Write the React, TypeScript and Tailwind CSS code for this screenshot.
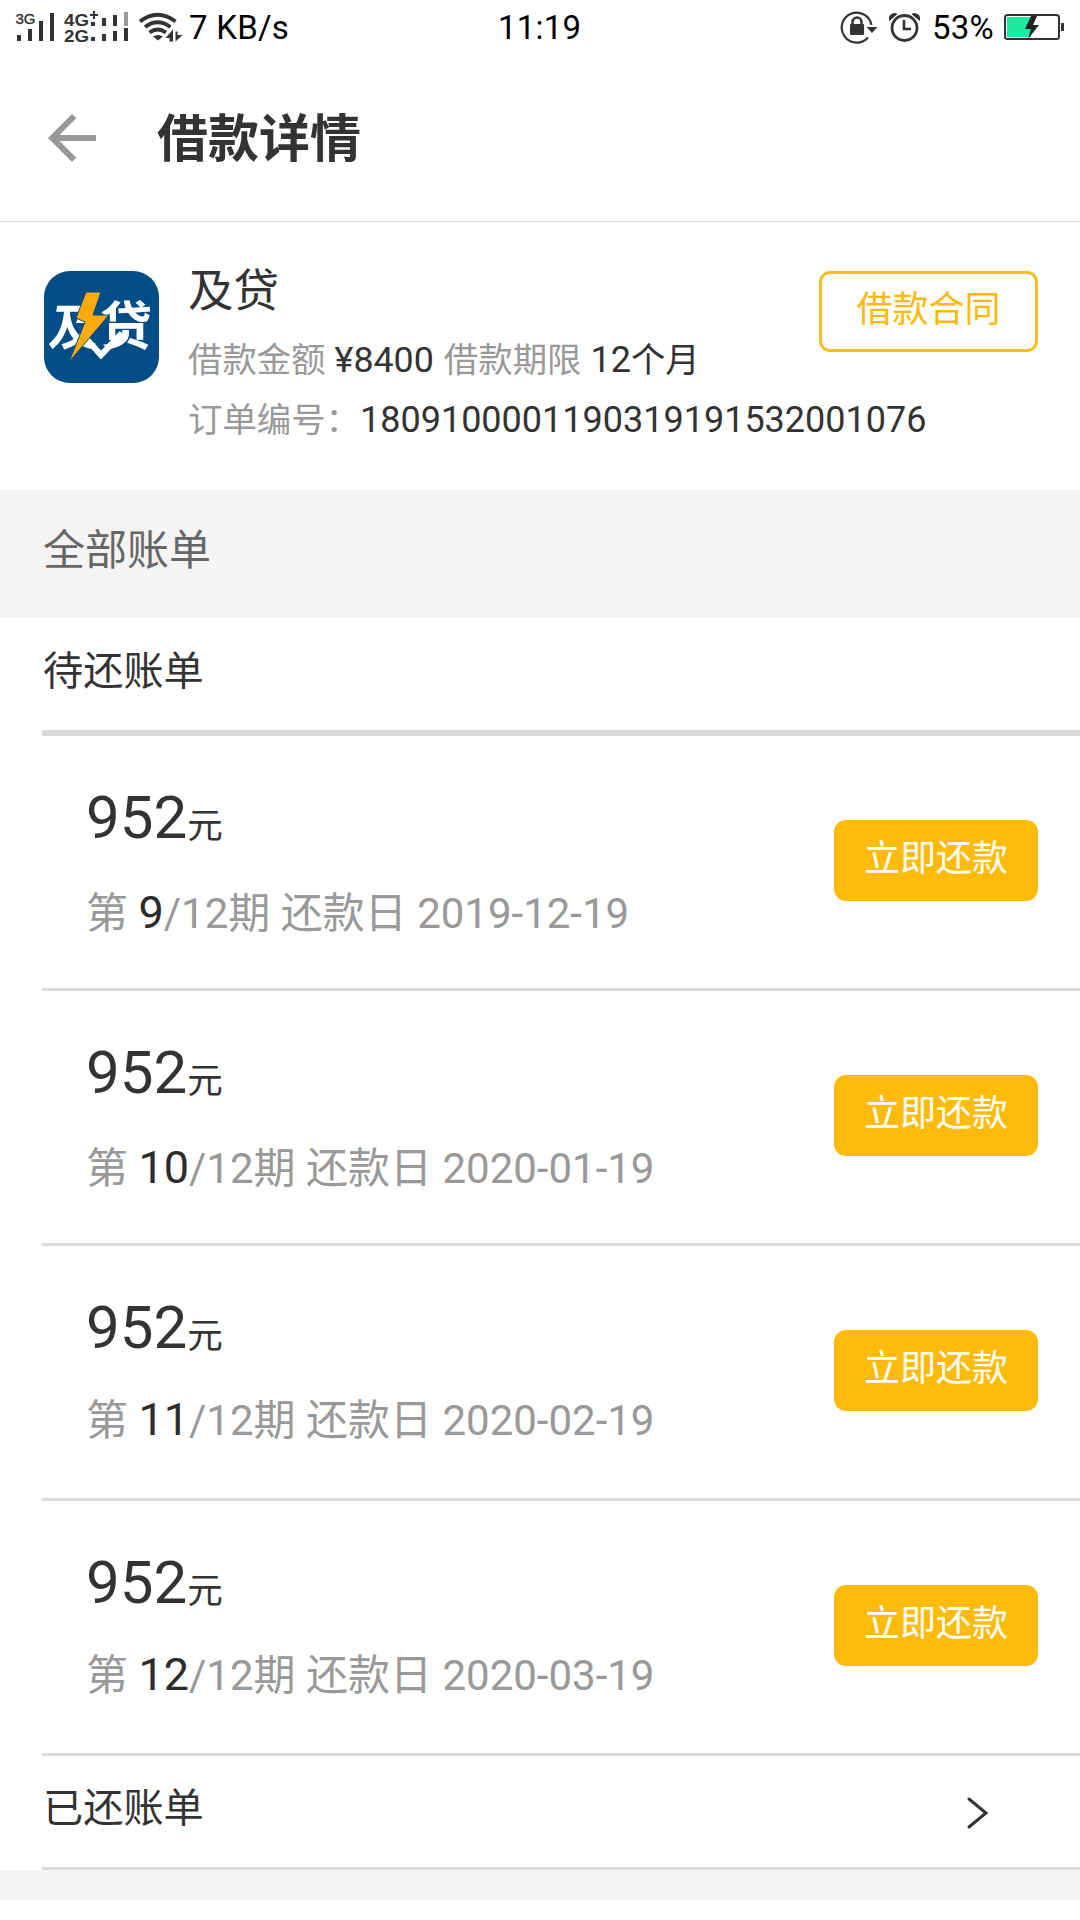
import React from 'react';
import { MdArrowBack } from 'react-icons/md';

interface Bill {
    period: number;
    total: number;
    amount: number;
    dueDate: string;
    // full class name of the gap between the amount and the period line
    gap: string;
}

const bills: Bill[] = [
    { period: 9, total: 12, amount: 952, dueDate: '2019-12-19', gap: 'mt-[30px]' },
    { period: 10, total: 12, amount: 952, dueDate: '2020-01-19', gap: 'mt-[30px]' },
    { period: 11, total: 12, amount: 952, dueDate: '2020-02-19', gap: 'mt-[27px]' },
    { period: 12, total: 12, amount: 952, dueDate: '2020-03-19', gap: 'mt-[27px]' },
];

const SignalIcons: React.FC = () => (
    <svg className="w-[132px] h-14" viewBox="0 0 132 56" fill="#333">
        {/* SIM 1 */}
        <text x="15.5" y="23.5" fontSize="14.5" textLength="20" lengthAdjust="spacingAndGlyphs" fontFamily="Liberation Sans, sans-serif" stroke="#333" strokeWidth="0.4">3G</text>
        <rect x="17" y="35" width="4" height="6" />
        <rect x="28" y="29" width="4" height="12" />
        <rect x="39" y="21" width="4" height="20" />
        <rect x="50" y="13" width="4" height="28" />
        {/* SIM 2 */}
        <text x="64" y="25.5" fontSize="17" fontWeight="700" textLength="25" lengthAdjust="spacingAndGlyphs" fontFamily="Liberation Sans, sans-serif">4G</text>
        <text x="64" y="41.5" fontSize="17" fontWeight="700" textLength="25" lengthAdjust="spacingAndGlyphs" fontFamily="Liberation Sans, sans-serif">2G</text>
        <path d="M93 11h2v3h3v2h-3v3h-2v-3h-3v-2h3z" />
        <rect x="91" y="22" width="4" height="4" />
        <rect x="102" y="18" width="4" height="8" />
        <rect x="113" y="15" width="4" height="11" />
        <rect x="124" y="12" width="4" height="14" fill="#999" />
        <rect x="91" y="37" width="4" height="4" />
        <rect x="102" y="34" width="4" height="7" />
        <rect x="113" y="31" width="4" height="10" />
        <rect x="124" y="28" width="4" height="13" />
    </svg>
);

const WifiIcon: React.FC = () => (
    <svg className="w-[46px] h-14" viewBox="137 0 46 56" fill="none" stroke="#333" strokeWidth="3.8">
        <path d="M140 21.5Q157.5 8 175.5 21.5" />
        <path d="M145 27Q157.5 17.5 170.5 27" />
        <path d="M149.5 32.5Q157.5 26.5 166 32.5" />
        <path d="M153 36.5Q158 33.5 163 36.5L158 40.5Z" fill="#333" stroke="none" />
        <path d="M173 29.5V41.5H169.5V38L165.5 38Z" fill="#333" stroke="none" />
        <path d="M175.5 41.5V31.5H177.5V35H182.5Z" fill="#333" stroke="none" />
    </svg>
);

const RotationLockIcon: React.FC = () => (
    <svg className="w-[38px] h-14" viewBox="840 0 38 56" fill="none" stroke="#333">
        <path d="M868 37.5A15 15 0 1 1 871.5 25" strokeWidth="2.2" />
        <path d="M866.5 27h11l-5.5 6z" fill="#333" stroke="none" />
        <rect x="850" y="24" width="14" height="11" rx="1" fill="#333" stroke="none" />
        <path d="M852.5 25v-3a4.5 4.5 0 0 1 9 0v3" strokeWidth="2.5" />
    </svg>
);

const AlarmIcon: React.FC = () => (
    <svg className="w-[32px] h-14" viewBox="888 0 32 56" fill="none" stroke="#333">
        <circle cx="904.5" cy="28" r="12.5" strokeWidth="2.8" />
        <path d="M904 20v9h7" strokeWidth="2.6" />
        <path d="M889.5 21a5.5 5.5 0 0 1 8-7zM919.5 21a5.5 5.5 0 0 0-8-7z" fill="#333" stroke="none" />
    </svg>
);

const BatteryIcon: React.FC = () => (
    <svg className="w-[62px] h-14" viewBox="1003 0 62 56">
        <rect x="1005" y="15" width="54" height="24" rx="2.5" fill="#fff" stroke="#333" strokeWidth="2" />
        <rect x="1007" y="17" width="24" height="20" fill="#1de9a0" />
        <rect x="1061" y="23" width="3" height="8" fill="#333" />
        <path d="M1031 16l-6 13h6l-3 10 11-14h-6l4-9z" fill="#222" />
    </svg>
);

const StatusBar: React.FC = () => (
    <div className="flex h-14 items-center text-[33px] leading-[56px] text-black">
        <SignalIcons />
        <div className="ml-[5px] flex w-[361px] items-center">
            <WifiIcon />
            <span className="ml-[6px] tracking-[0.25px]">7 KB/s</span>
        </div>
        <span className="w-[342px] tracking-[0.2px]">11:19</span>
        <RotationLockIcon />
        <div className="ml-[10px]">
            <AlarmIcon />
        </div>
        <span className="ml-[12px] w-[71px] tracking-[0.2px]">53%</span>
        <BatteryIcon />
    </div>
);

const Logo: React.FC = () => (
    <svg className="h-[112px] w-[115px] shrink-0 rounded-[26px] bg-[#034d86]" viewBox="0 0 115 112">
        <g fill="#fff" fontFamily="Noto Sans CJK SC, sans-serif" fontWeight="700">
            <text x="14" y="74" fontSize="49" transform="skewX(-8)">及</text>
            <text x="56" y="74" fontSize="52">贷</text>
        </g>
        {/* check mark under the lightning bolt */}
        <path d="M38 63L57 84L78 62" fill="none" stroke="#fff" strokeWidth="6" />
        <path d="M42 21H57L49 44H65L25 91L41 51L32 47Z" fill="#fcab0a" stroke="#034d86" strokeWidth="1" />
    </svg>
);

const BillRow: React.FC<{ bill: Bill }> = ({ bill }) => (
    <div className="ml-[42px] flex h-[255px] items-start justify-between border-b-[3px] border-[#dbdbdb] pr-[42px] pl-[44px]">
        <div className="pt-[47px]">
            <div className="h-[70px] leading-[70px] text-[#333]">
                <span className="text-[60px]">{bill.amount}</span>
                <span className="text-[35.5px]">元</span>
            </div>
            <div className={`h-[60px] text-[42px] leading-[60px] whitespace-nowrap text-[#999] ${bill.gap}`}>
                第 <span className="text-[45px] text-[#2b2b2b]">{bill.period}</span>/{bill.total}期 还款日 {bill.dueDate}
            </div>
        </div>
        <button className="mt-[84px] h-[81px] w-[204px] rounded-[12px] bg-[#febb0c] pb-[4px] text-[36px] text-white">
            立即还款
        </button>
    </div>
);

const App: React.FC = () => {
    return (
        <div className="h-[1920px] w-[1080px] overflow-hidden bg-white font-['Roboto','Noto_Sans_CJK_SC',sans-serif] text-[#333]">
            <StatusBar />

            {/* Header */}
            <header className="flex h-[166px] items-center border-b border-[#dcdcdc]">
                <MdArrowBack className="-mt-px ml-9 h-[72px] w-[72px] text-[#999]" />
                <h1 className="mt-[4px] ml-[49px] text-[51px] font-bold">借款详情</h1>
            </header>

            {/* Loan summary */}
            <section className="flex h-[268px] items-start pt-[49px] pl-[44px]">
                <Logo />
                <div className="ml-[29px] w-[631px] whitespace-nowrap">
                    <div className="-mt-[12px] h-[66px] text-[45.5px] leading-[66px]">及贷</div>
                    <div className="mt-[5px] h-[60px] text-[34.4px] leading-[60px]">
                        <span className="text-[#999]">借款金额</span>
                        <span className="ml-[9px] text-[35.8px]">¥8400</span>
                        <span className="ml-[10px] text-[#999]">借款期限</span>
                        <span className="ml-[9px] text-[36px]">12</span>个月
                    </div>
                    <div className="h-[60px] text-[34.4px] leading-[60px]">
                        <span className="text-[#999]">订单编号：</span>
                        <span className="text-[36px]">1809100001190319191532001076</span>
                    </div>
                </div>
                <button className="h-[81px] w-[219px] rounded-[11px] border-[3px] border-[#f3bf22] pb-[4px] text-[36px] text-[#fdb90b]">
                    借款合同
                </button>
            </section>

            <div className="h-[128px] bg-[#f4f4f4] pt-[31px] pl-[43px] text-[42px] leading-[60px] text-[#666]">全部账单</div>

            {/* Unpaid bills */}
            <div className="ml-[42px] h-[118px] border-b-[6px] border-[#d9d9d9] pt-[24px] pl-px text-[40.2px] leading-[60px]">
                待还账单
            </div>
            {bills.map((bill) => (
                <BillRow key={bill.period} bill={bill} />
            ))}

            {/* Paid bills */}
            <div className="ml-[42px] flex h-[114px] items-center justify-between border-b-[3px] border-[#dbdbdb] pr-[89px] pl-px">
                <span className="-mt-[5px] text-[40.2px] leading-[60px]">已还账单</span>
                <svg className="mt-[2px] h-[36px] w-[26px]" viewBox="0 0 26 36" fill="none" stroke="#333" strokeWidth="3" strokeLinecap="round">
                    <path d="M4 4L21 18L4 32" />
                </svg>
            </div>
            <div className="h-[30px] bg-[#f4f4f4]" />
        </div>
    );
};

export default App;
